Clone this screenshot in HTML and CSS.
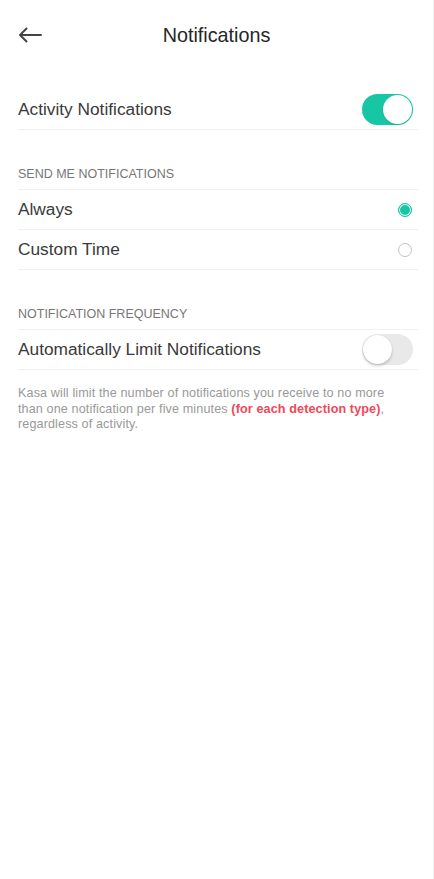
FILE: index.html
```html
<!DOCTYPE html>
<html lang="en">
<head>
    <meta charset="UTF-8">
    <title>Notifications</title>
    <link rel="stylesheet" href="styles.css">
</head>
<body>
    <div id="page">
        <div id="header">
            <span id="back">
                <svg width="24" height="16" viewBox="0 0 24 16">
                    <path d="M23 8H2M8.5 1.5L2 8l6.5 6.5" fill="none" stroke="#444" stroke-width="2" stroke-linecap="round" stroke-linejoin="round"/>
                </svg>
            </span>
            <span id="title">Notifications</span>
        </div>

        <div class="list first">
            <div class="row">
                <span>Activity Notifications</span>
                <span class="switch on"></span>
            </div>
        </div>

        <div class="group-title">SEND ME NOTIFICATIONS</div>
        <div class="list">
            <div class="row">
                <span>Always</span>
                <span class="radio checked"></span>
            </div>
            <div class="row">
                <span>Custom Time</span>
                <span class="radio"></span>
            </div>
        </div>

        <div class="group-title">NOTIFICATION FREQUENCY</div>
        <div class="list">
            <div class="row">
                <span>Automatically Limit Notifications</span>
                <span class="switch"></span>
            </div>
        </div>
        <p id="note">Kasa will limit the number of notifications you receive to no more than one notification per five minutes <b>(for each detection type)</b>, regardless of activity.</p>
    </div>
</body>
</html>
```

FILE: styles.css
```css
*{
    margin: 0;
    padding: 0;
    box-sizing: border-box;
}
body{
    background: #ffffff;
    font-family: "Liberation Sans", Arial, sans-serif;
    color: #3a3a3a;
}
#page{
    width: 434px;
    min-height: 879px;
    border-right: 1px solid #f0f0f0;
}
#header{
    height: 70px;
    position: relative;
    display: flex;
    align-items: center;
    justify-content: center;
}
#back{
    position: absolute;
    left: 18px;
    top: 27px;
    width: 24px;
    height: 16px;
    display: flex;
}
#title{
    font-size: 19.8px;
    color: #262626;
}
.list{
    margin: 0 18px;
    width: 400px;
}
.list.first{
    margin-top: 20px;
}
.row{
    height: 40px;
    display: flex;
    align-items: center;
    justify-content: space-between;
    padding-right: 5px;
    border-bottom: 1px solid #f0f0f0;
    font-size: 17.3px;
}
.group-title{
    margin: 0 18px;
    width: 400px;
    padding: 36px 0 7px;
    line-height: 16px;
    font-size: 12.5px;
    color: #777;
    border-bottom: 1px solid #f0f0f0;
}
.switch{
    width: 51px;
    height: 31px;
    border-radius: 16px;
    background: #e9e9e9;
    position: relative;
}
.switch:after{
    content: "";
    position: absolute;
    left: 1px;
    top: 1px;
    width: 29px;
    height: 29px;
    border-radius: 50%;
    background: #fff;
    box-shadow: 0 2px 3px rgba(0,0,0,0.18), 0 0 1px rgba(0,0,0,0.15);
}
.switch.on{
    background: #17c6a4;
}
.switch.on:after{
    left: 21px;
    box-shadow: 0 1px 2px rgba(0,0,0,0.12);
}
.radio{
    width: 14px;
    height: 14px;
    border-radius: 50%;
    border: 1px solid #c2c2c2;
    margin-right: 1px;
}
.radio.checked{
    border-color: #17c6a4;
    background: #17c6a4;
    box-shadow: inset 0 0 0 1px #fff;
}
#note{
    margin: 16px 18px 0;
    width: 390px;
    font-size: 12.6px;
    line-height: 15.5px;
    letter-spacing: 0.12px;
    color: #999;
}
#note b{
    color: #f0475a;
}
```
